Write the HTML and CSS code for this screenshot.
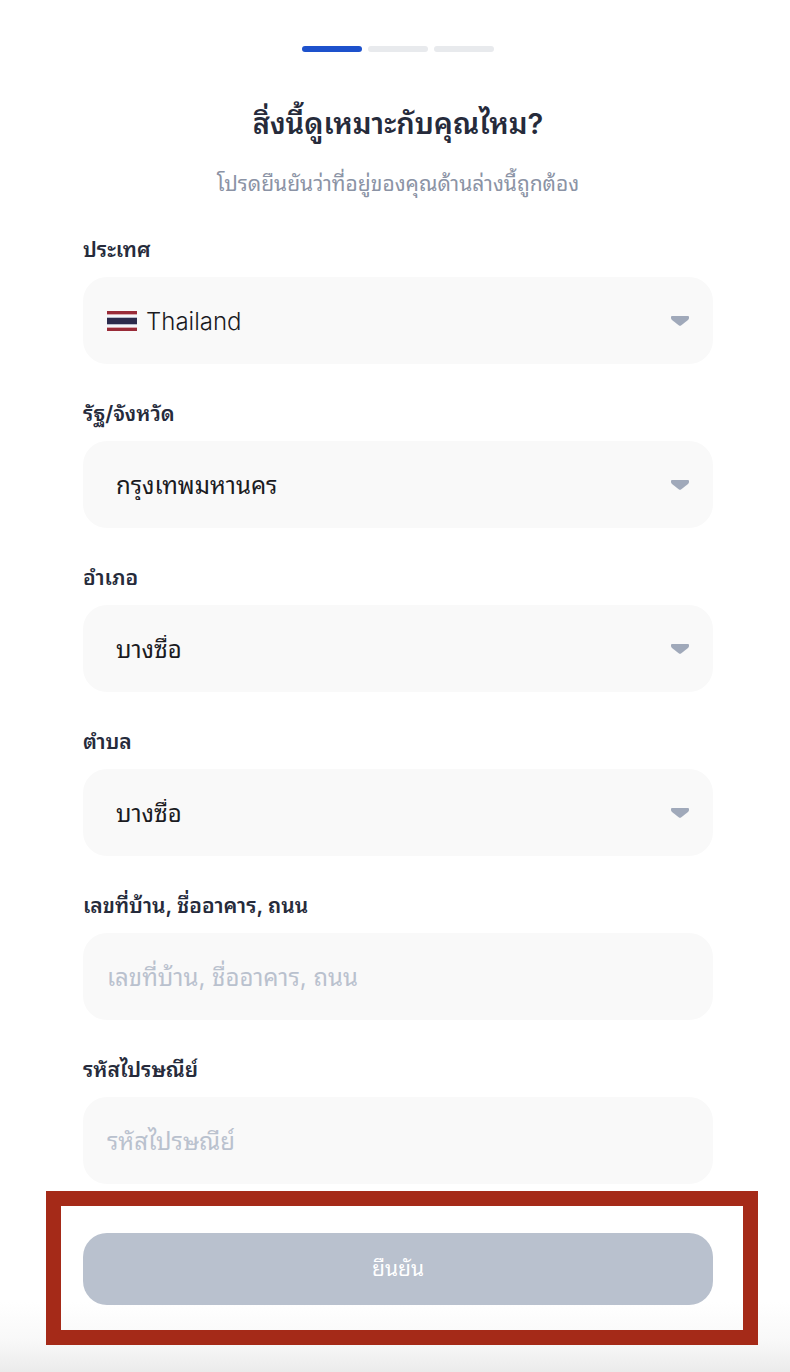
FILE: index.html
```html
<!DOCTYPE html>
<html lang="th">
<head>
    <meta charset="UTF-8">
    <meta name="viewport" content="width=device-width, initial-scale=1.0">
    <title>ยืนยันที่อยู่</title>
    <link rel="stylesheet" href="styles.css">
</head>
<body>
    <main class="page">

        <div class="steps">
            <span class="step active"></span>
            <span class="step"></span>
            <span class="step"></span>
        </div>

        <h1>สิ่งนี้ดูเหมาะกับคุณไหม?</h1>
        <p class="intro">โปรดยืนยันว่าที่อยู่ของคุณด้านล่างนี้ถูกต้อง</p>

        <form class="form">

            <div class="field">
                <label for="country">ประเทศ</label>
                <div class="control">
                    <svg class="flag" viewBox="0 0 30 20" aria-hidden="true">
                        <rect width="30" height="20" fill="#992b38"/>
                        <rect y="3" width="30" height="14" fill="#d9a9b0"/>
                        <rect y="4" width="30" height="12" fill="#f4f5f9"/>
                        <rect y="6" width="30" height="8" fill="#b9bccb"/>
                        <rect y="7" width="30" height="6" fill="#2b2a4c"/>
                    </svg>
                    <select id="country" class="country">
                        <option>Thailand</option>
                    </select>
                    <svg class="arrow" viewBox="0 0 18 10" aria-hidden="true"><path d="M1 0h16q1 0 1 1v1q0 1-1 2l-7 5.500q-1 .7-2 0L1 4Q0 3 0 2V1q0-1 1-1z"/></svg>
                </div>
            </div>

            <div class="field">
                <label for="province">รัฐ/จังหวัด</label>
                <div class="control">
                    <select id="province">
                        <option>กรุงเทพมหานคร</option>
                    </select>
                    <svg class="arrow" viewBox="0 0 18 10" aria-hidden="true"><path d="M1 0h16q1 0 1 1v1q0 1-1 2l-7 5.500q-1 .7-2 0L1 4Q0 3 0 2V1q0-1 1-1z"/></svg>
                </div>
            </div>

            <div class="field">
                <label for="district">อำเภอ</label>
                <div class="control">
                    <select id="district">
                        <option>บางซื่อ</option>
                    </select>
                    <svg class="arrow" viewBox="0 0 18 10" aria-hidden="true"><path d="M1 0h16q1 0 1 1v1q0 1-1 2l-7 5.500q-1 .7-2 0L1 4Q0 3 0 2V1q0-1 1-1z"/></svg>
                </div>
            </div>

            <div class="field">
                <label for="subdistrict">ตำบล</label>
                <div class="control">
                    <select id="subdistrict">
                        <option>บางซื่อ</option>
                    </select>
                    <svg class="arrow" viewBox="0 0 18 10" aria-hidden="true"><path d="M1 0h16q1 0 1 1v1q0 1-1 2l-7 5.500q-1 .7-2 0L1 4Q0 3 0 2V1q0-1 1-1z"/></svg>
                </div>
            </div>

            <div class="field">
                <label for="street">เลขที่บ้าน, ชื่ออาคาร, ถนน</label>
                <div class="control">
                    <input type="text" id="street" placeholder="เลขที่บ้าน, ชื่ออาคาร, ถนน">
                </div>
            </div>

            <div class="field">
                <label for="postcode">รหัสไปรษณีย์</label>
                <div class="control">
                    <input type="text" id="postcode" placeholder="รหัสไปรษณีย์">
                </div>
            </div>

            <div class="submit">
                <button type="submit">ยืนยัน</button>
            </div>

        </form>

    </main>
</body>
</html>
```
FILE: styles.css
```css
* {
    box-sizing: border-box;
}

body {
    margin: 0;
    font-family: Inter, "Noto Sans Thai Looped", Loma, Garuda, Waree, "Noto Sans", sans-serif;
    color: #262b3b;
    background: #fff;
}

.page {
    display: flex;
    flex-direction: column;
    min-height: 100vh;
    padding: 46px 32px 27px 46px;
    background: linear-gradient(to top, #ebebeb, #f8f8f8 30px, #fff 70px);
}

.steps {
    display: flex;
    justify-content: center;
    gap: 6px;
    padding-right: 8px;
}

.step {
    width: 60px;
    height: 6px;
    border-radius: 3px;
    background: #e8eaed;
}

.step.active {
    background: #1d51cc;
}

h1 {
    margin: 48px 8px 0 0;
    font-size: 29px;
    line-height: 48px;
    font-weight: 600;
    text-align: center;
}

.intro {
    margin: 20px 8px 0 0;
    font-size: 21px;
    line-height: 32px;
    text-align: center;
    color: #8b93a5;
}

.form {
    margin-top: 35px;
}

.field {
    margin: 0 45px 35px 37px;
}

.field label {
    display: block;
    margin-bottom: 12px;
    font-size: 21px;
    line-height: 30px;
    font-weight: 600;
}

.control {
    display: flex;
    align-items: center;
    height: 87px;
    padding: 0 24px;
    border-radius: 24px;
    background: #f9f9f9;
}

.control select,
.control input {
    flex: 1;
    min-width: 0;
    height: 100%;
    padding: 2px 0 0;
    border: 0;
    outline: 0;
    background: none;
    font-family: inherit;
    font-size: 24px;
    color: #1b1b1f;
}

.control select {
    appearance: none;
    padding-left: 9px;
}

.control .country {
    font-weight: 300;
}

.control input::placeholder {
    color: #b9c1ce;
    opacity: 1;
}

.flag {
    width: 30px;
    height: 20px;
}

.arrow {
    width: 18px;
    height: 10px;
    fill: #a0a9ba;
}

.submit {
    margin-top: -28px;
    padding: 27px 30px 25px 22px;
    border: 15px solid #a52a18;
}

.submit button {
    display: block;
    width: 100%;
    height: 72px;
    padding: 0 0 5px;
    border: 0;
    border-radius: 24px;
    background: #b9c1ce;
    color: #fff;
    font-family: inherit;
    font-size: 21px;
}
```
